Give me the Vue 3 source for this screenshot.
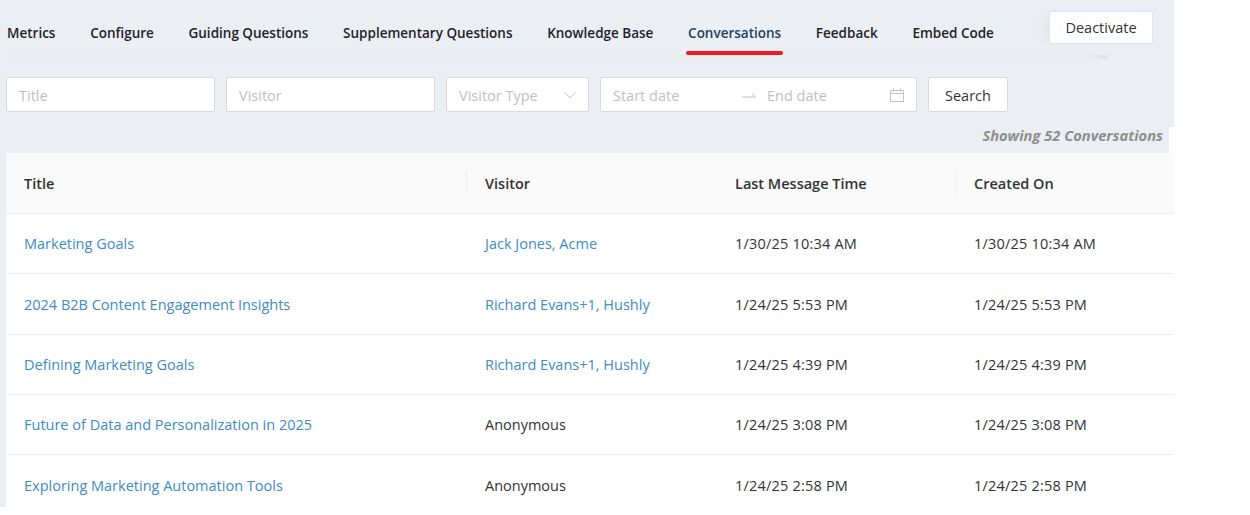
<script setup>
const tabs = ['Metrics', 'Configure', 'Guiding Questions', 'Supplementary Questions', 'Knowledge Base', 'Conversations', 'Feedback', 'Embed Code']
const rows = [
  { title: 'Marketing Goals', visitor: 'Jack Jones, Acme', link: true, last: '1/30/25 10:34 AM' },
  { title: '2024 B2B Content Engagement Insights', visitor: 'Richard Evans+1, Hushly', link: true, last: '1/24/25 5:53 PM' },
  { title: 'Defining Marketing Goals', visitor: 'Richard Evans+1, Hushly', link: true, last: '1/24/25 4:39 PM' },
  { title: 'Future of Data and Personalization in 2025', visitor: 'Anonymous', link: false, last: '1/24/25 3:08 PM' },
  { title: 'Exploring Marketing Automation Tools', visitor: 'Anonymous', link: false, last: '1/24/25 2:58 PM' },
]
</script>

<template>
  <div class="page">
    <div class="nav">
      <div class="tabs">
        <a v-for="t in tabs" :key="t" class="tab" :class="{ active: t === 'Conversations' }">{{ t }}</a>
      </div>
      <button class="deactivate">Deactivate</button>
    </div>

    <div class="filters">
      <div class="field w209"><span>Title</span></div>
      <div class="field w209"><span>Visitor</span></div>
      <div class="field w143 between">
        <span>Visitor Type</span>
        <svg width="12" height="8" viewBox="0 0 12 8"><path d="M.5 1 6 7l5.500-6" fill="none" stroke="#bfbfbf" stroke-width="1"/></svg>
      </div>
      <div class="field w317 range">
        <span class="start">Start date</span>
        <svg class="arrow" width="14" height="6" viewBox="0 0 14 6"><path d="M0 5h13.500L10 2" fill="none" stroke="#bfbfbf" stroke-width="1"/></svg>
        <span class="end">End date</span>
        <svg class="cal" width="14" height="14" viewBox="0 0 14 14"><path d="M.5 2.500h13v11H.5zM.5 5.500h13M3.500.5v3M10.500.5v3" fill="none" stroke="#c4c4c4" stroke-width="1"/></svg>
      </div>
      <button class="search">Search</button>
    </div>

    <div class="count-row">
      <span class="count">Showing 52 Conversations</span>
      <i class="notch"></i>
    </div>

    <div class="table">
      <div class="row head">
        <div class="cell">Title</div>
        <div class="cell sep">Visitor</div>
        <div class="cell">Last Message Time</div>
        <div class="cell sep">Created On</div>
      </div>
      <div v-for="r in rows" :key="r.title" class="row">
        <div class="cell link">{{ r.title }}</div>
        <div class="cell" :class="{ link: r.link }">{{ r.visitor }}</div>
        <div class="cell date">{{ r.last }}</div>
        <div class="cell date">{{ r.last }}</div>
      </div>
    </div>
  </div>
</template>

<style>
html, body { background: #fff; }
</style>

<style scoped>
.page {
  width: 1174px;
  height: 507px;
  overflow: hidden;
  background: #ebeef3;
  font-family: "Open Sans", "Noto Sans", sans-serif;
  font-size: 14.5px;
  color: #333;
}
.nav {
  display: flex;
  height: 58px;
  padding-left: 7px;
  box-sizing: border-box;
  position: relative;
}
.nav::after {
  content: "";
  position: absolute;
  left: 7px;
  top: 55px;
  width: 1101px;
  height: 4px;
  background: linear-gradient(to right, #ebecee 98%, #dfe1e4);
}
.tabs {
  display: flex;
  gap: 34.7px;
}
.tab {
  position: relative;
  height: 55px;
  padding-top: 23px;
  box-sizing: border-box;
  font-size: 13.5px;
  line-height: 20px;
  font-weight: 600;
  color: #1f2329;
  white-space: nowrap;
}
.tab.active { color: #1f3f63; }
.tab.active::after {
  content: "";
  position: absolute;
  z-index: 1;
  left: -2px;
  right: -2px;
  top: 51px;
  height: 4px;
  border-radius: 2px;
  background: #ed1c24;
}
.deactivate {
  position: absolute;
  left: 1049px;
  top: 11px;
  width: 104px;
  height: 33px;
  padding: 0;
  background: #fff;
  border: 1px solid #e3e5e8;
  border-radius: 2px;
  box-shadow: -8px -1px 8px -4px #e2e4e9;
  font: inherit;
  color: #333;
}
.filters {
  display: flex;
  gap: 11px;
  padding: 19px 0 0 6px;
}
.field {
  height: 35px;
  box-sizing: border-box;
  display: flex;
  align-items: center;
  padding: 1px 12px 0;
  background: #fff;
  border: 1px solid #d9d9d9;
  border-radius: 2px;
  color: #bfbfbf;
}
.w209 { width: 209px; }
.w143 { width: 143px; }
.w317 { width: 317px; }
.between { justify-content: space-between; }
.range { padding-right: 12px; }
.start { width: 129px; }
.arrow { margin-right: 11px; }
.end { flex: 1; }
.search {
  width: 80px;
  height: 35px;
  padding: 1px 0 0;
  background: #fff;
  border: 1px solid #d9d9d9;
  border-radius: 2px;
  font: inherit;
  color: #333;
}
.count-row {
  height: 41px;
  position: relative;
  display: flex;
  justify-content: flex-end;
  align-items: flex-start;
  padding-right: 11px;
}
.count {
  margin-top: 13px;
  line-height: 20px;
  font-size: 14.7px;
  font-weight: 700;
  font-style: italic;
  color: #8f8f8f;
}
.notch {
  position: absolute;
  right: 0;
  top: 15px;
  width: 5px;
  height: 26px;
  background: #fff;
}
.table {
  margin-left: 6px;
  background: #fff;
}
.row {
  display: grid;
  grid-template-columns: 461px 250px 239px 1fr;
  height: 60.36px;
  box-sizing: border-box;
  border-bottom: 1px solid #eceef0;
}
.row.head {
  height: 61px;
  background: #fafafa;
  font-weight: 600;
}
.cell {
  position: relative;
  display: flex;
  align-items: center;
  padding-left: 18px;
  white-space: nowrap;
}
.date { letter-spacing: 0.2px; }
.head .sep::before {
  content: "";
  position: absolute;
  left: -1px;
  top: 17px;
  height: 26px;
  width: 1px;
  background: #eeeff1;
}
.link { color: #3d8cc4; }
</style>
